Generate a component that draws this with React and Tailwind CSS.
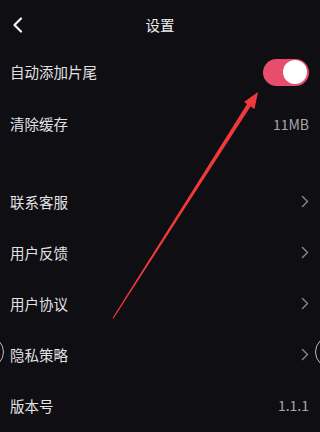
import React from "react";

const Chevron = () => (
  <svg width="8" height="13" viewBox="0 0 8 13" fill="none">
    <path d="M1.5 1.5 L6.5 6.5 L1.5 11.5" stroke="#8a8a8e" strokeWidth="1.4" strokeLinecap="round" strokeLinejoin="round" />
  </svg>
);

const Row = ({ label, right, h = "h-[51px]" }) => (
  <div className={`flex ${h} items-center justify-between pl-[10px] pr-[11px]`}>
    <span className="text-[14.5px] text-[#e2e2e4]">{label}</span>
    {right}
  </div>
);

export default function App() {
  return (
    <div
      className="relative h-[432px] w-[320px] overflow-hidden bg-[#0f0e13]"
      style={{ fontFamily: '"Noto Sans CJK SC", "Noto Sans", sans-serif' }}
    >
      <div className="relative flex h-[46px] items-center justify-center">
        <svg className="absolute left-[12px] top-[17px]" width="12" height="16" viewBox="0 0 12 16" fill="none">
          <path d="M9 1.5 L2.5 8 L9 14.5" stroke="#f2f2f2" strokeWidth="2.2" strokeLinecap="round" strokeLinejoin="round" />
        </svg>
        <span className="mt-[4px] text-[14.5px] text-[#ececee]">设置</span>
      </div>

      <Row
        label="自动添加片尾"
        h="h-[52px]"
        right={
          <div className="flex h-[27px] w-[46px] items-center justify-end rounded-full bg-[#e84d6d] pr-[2px]">
            <div className="h-[24px] w-[24px] rounded-full bg-white" />
          </div>
        }
      />
      <Row label="清除缓存" h="h-[52px]" right={<span className="text-[14px] text-[#a6a6aa]">11MB</span>} />
      <div className="h-[26px]" />
      <Row label="联系客服" right={<Chevron />} />
      <Row label="用户反馈" right={<Chevron />} />
      <Row label="用户协议" right={<Chevron />} />
      <Row label="隐私策略" right={<Chevron />} />
      <Row label="版本号" right={<span className="text-[14px] text-[#a6a6aa]">1.1.1</span>} />

      <div className="absolute left-[-28px] top-[336px] h-[32px] w-[32px] rounded-full border border-[#bdbdc0]" />
      <div className="absolute left-[315px] top-[336px] h-[32px] w-[32px] rounded-full border border-[#bdbdc0]" />

      <svg className="pointer-events-none absolute left-0 top-0" width="320" height="432" viewBox="0 0 320 432">
        <polygon points="112.5,318 113.5,318.5 251.5,105 248,102.5" fill="#f03a3a" />
        <polygon points="258,92 254.5,109 244,102" fill="#f03a3a" />
      </svg>
    </div>
  );
}
